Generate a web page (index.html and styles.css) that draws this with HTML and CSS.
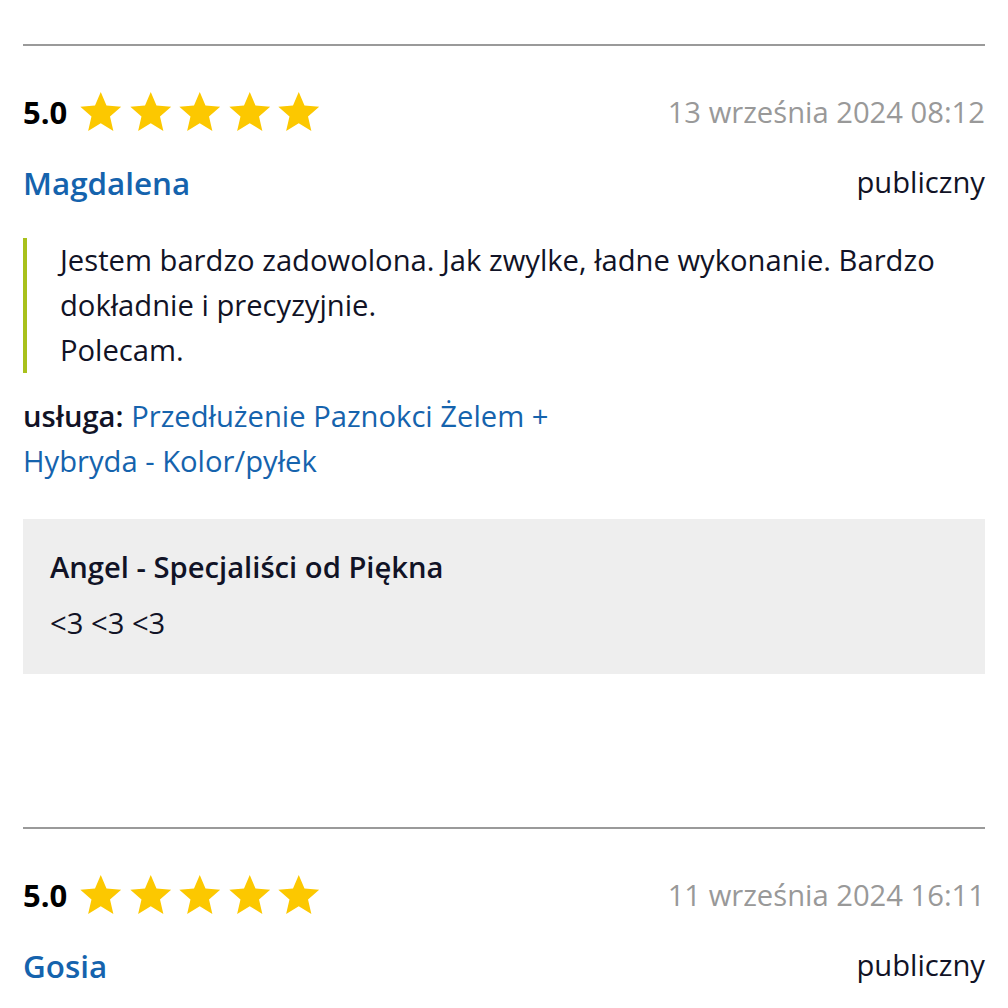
FILE: index.html
```html
<!DOCTYPE html>
<html lang="pl">
<head>
  <meta charset="UTF-8">
  <title>Opinie klientów</title>
  <link rel="stylesheet" href="styles.css">
</head>
<body>

  <!-- Reviews list -->
  <div class="reviews">

    <div class="review">
      <div class="review-top">
        <div class="rating">
          <span class="rating-value">5.0</span>
          <span class="stars">
            <svg viewBox="0 0 24 24"><path d="M12 17.27L18.18 21l-1.64-7.03L22 9.24l-7.19-.61L12 2 9.19 8.63 2 9.24l5.46 4.73L5.82 21z"/></svg>
            <svg viewBox="0 0 24 24"><path d="M12 17.27L18.18 21l-1.64-7.03L22 9.24l-7.19-.61L12 2 9.19 8.63 2 9.24l5.46 4.73L5.82 21z"/></svg>
            <svg viewBox="0 0 24 24"><path d="M12 17.27L18.18 21l-1.64-7.03L22 9.24l-7.19-.61L12 2 9.19 8.63 2 9.24l5.46 4.73L5.82 21z"/></svg>
            <svg viewBox="0 0 24 24"><path d="M12 17.27L18.18 21l-1.64-7.03L22 9.24l-7.19-.61L12 2 9.19 8.63 2 9.24l5.46 4.73L5.82 21z"/></svg>
            <svg viewBox="0 0 24 24"><path d="M12 17.27L18.18 21l-1.64-7.03L22 9.24l-7.19-.61L12 2 9.19 8.63 2 9.24l5.46 4.73L5.82 21z"/></svg>
          </span>
        </div>
        <span class="review-date">13 września 2024 08:12</span>
      </div>

      <div class="review-author">
        <a href="#" class="author-name">Magdalena</a>
        <span class="visibility">publiczny</span>
      </div>

      <blockquote class="review-text">
        Jestem bardzo zadowolona. Jak zwylke, ładne wykonanie. Bardzo dokładnie i precyzyjnie.<br>
        Polecam.
      </blockquote>

      <p class="service">
        <b>usługa:</b> <a href="#">Przedłużenie Paznokci Żelem + Hybryda - Kolor/pyłek</a>
      </p>

      <div class="reply">
        <p class="reply-title">Angel - Specjaliści od Piękna</p>
        <p class="reply-text">&lt;3 &lt;3 &lt;3</p>
      </div>
    </div>

    <div class="review">
      <div class="review-top">
        <div class="rating">
          <span class="rating-value">5.0</span>
          <span class="stars">
            <svg viewBox="0 0 24 24"><path d="M12 17.27L18.18 21l-1.64-7.03L22 9.24l-7.19-.61L12 2 9.19 8.63 2 9.24l5.46 4.73L5.82 21z"/></svg>
            <svg viewBox="0 0 24 24"><path d="M12 17.27L18.18 21l-1.64-7.03L22 9.24l-7.19-.61L12 2 9.19 8.63 2 9.24l5.46 4.73L5.82 21z"/></svg>
            <svg viewBox="0 0 24 24"><path d="M12 17.27L18.18 21l-1.64-7.03L22 9.24l-7.19-.61L12 2 9.19 8.63 2 9.24l5.46 4.73L5.82 21z"/></svg>
            <svg viewBox="0 0 24 24"><path d="M12 17.27L18.18 21l-1.64-7.03L22 9.24l-7.19-.61L12 2 9.19 8.63 2 9.24l5.46 4.73L5.82 21z"/></svg>
            <svg viewBox="0 0 24 24"><path d="M12 17.27L18.18 21l-1.64-7.03L22 9.24l-7.19-.61L12 2 9.19 8.63 2 9.24l5.46 4.73L5.82 21z"/></svg>
          </span>
        </div>
        <span class="review-date">11 września 2024 16:11</span>
      </div>

      <div class="review-author">
        <a href="#" class="author-name">Gosia</a>
        <span class="visibility">publiczny</span>
      </div>
    </div>

  </div>

</body>
</html>
```

FILE: styles.css
```css
body {
  margin: 0;
  padding: 0 23px;
  font-family: "Open Sans", Arial, sans-serif;
  font-size: 29.2px;
  color: #111326;
  background: #fff;
}

a {
  color: #1563ad;
  text-decoration: none;
}

.reviews {
  padding-top: 44px;
}

.review {
  border-top: 2px solid #9a9a9a;
  padding-top: 46px;
  margin-bottom: 153px;
}

.review-top,
.review-author {
  display: flex;
  justify-content: space-between;
  align-items: center;
}

.rating {
  display: flex;
  align-items: center;
  height: 40px;
}

.rating-value {
  font-size: 31px;
  font-weight: 700;
  color: #000;
  margin-right: 9px;
}

.stars {
  display: flex;
}

.stars svg {
  width: 49.5px;
  height: 49px;
  fill: #fcc800;
}

.review-date {
  color: #999;
}

.review-author {
  margin-top: 30px;
  height: 40px;
}

.author-name {
  font-size: 31.4px;
  font-weight: 600;
}

.review-text {
  margin: 36px 0 0;
  padding-left: 33px;
  border-left: 4px solid #a9c11c;
  line-height: 45px;
}

.service {
  margin: 21px 0 0;
  max-width: 600px;
  line-height: 45px;
}

.service b {
  font-weight: 600;
}

.reply {
  margin-top: 35px;
  padding: 26px 27px 28px;
  background: #eeeeee;
}

.reply p {
  margin: 0;
  line-height: 45px;
}

.reply-title {
  font-weight: 600;
  margin-bottom: 11px !important;
}
```
